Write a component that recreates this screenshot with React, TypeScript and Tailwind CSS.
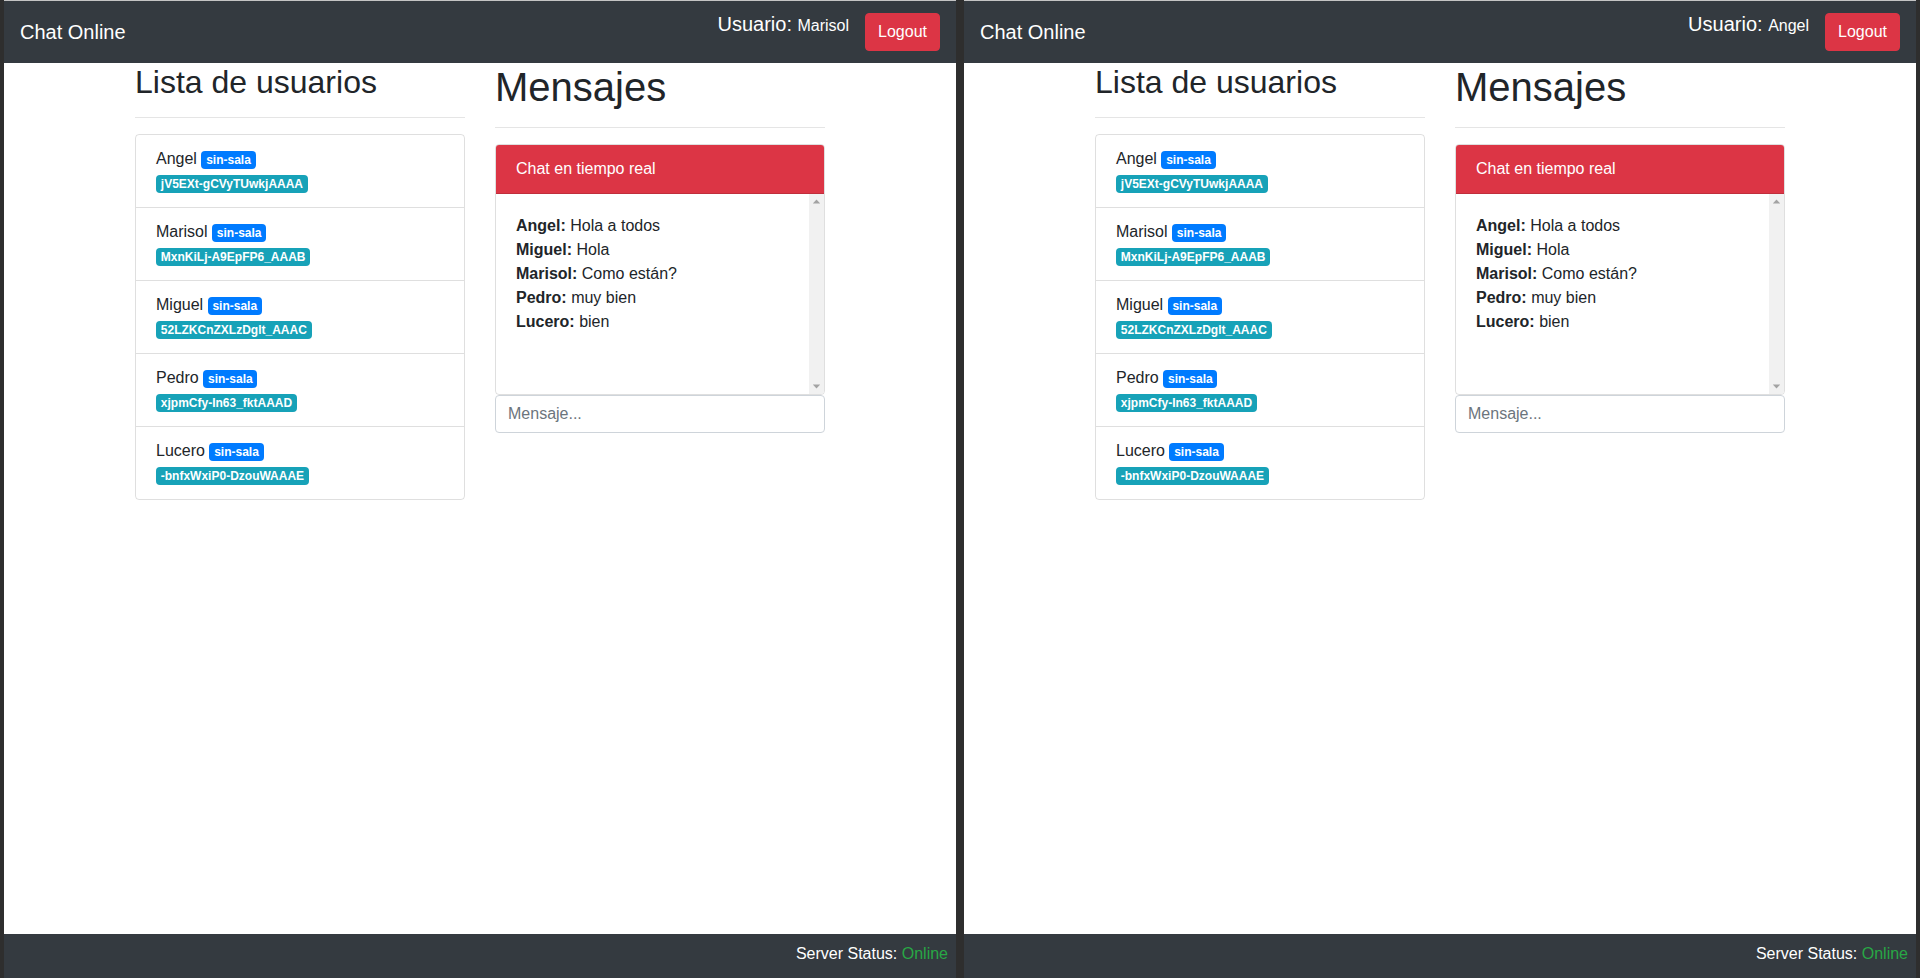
import React from 'react'

type User = { name: string; id: string }

const users: User[] = [
  { name: 'Angel', id: 'jV5EXt-gCVyTUwkjAAAA' },
  { name: 'Marisol', id: 'MxnKiLj-A9EpFP6_AAAB' },
  { name: 'Miguel', id: '52LZKCnZXLzDglt_AAAC' },
  { name: 'Pedro', id: 'xjpmCfy-In63_fktAAAD' },
  { name: 'Lucero', id: '-bnfxWxiP0-DzouWAAAE' },
]

const messages = [
  { from: 'Angel', text: 'Hola a todos' },
  { from: 'Miguel', text: 'Hola' },
  { from: 'Marisol', text: 'Como están?' },
  { from: 'Pedro', text: 'muy bien' },
  { from: 'Lucero', text: 'bien' },
]

function ChatWindow({ current }: { current: string }) {
  return (
    <div className="flex flex-col w-[952px] h-full bg-white border-t border-[#c4c4c4]">
      <nav className="h-[62px] shrink-0 bg-[#343a40] px-4 flex items-center justify-between">
        <span className="text-[20px] leading-[30px] text-white">Chat Online</span>
        <div className="flex items-center">
          <h5 className="text-[20px] leading-[1.2] text-white mb-4 mr-4">
            Usuario: <small className="text-[16px]">{current}</small>
          </h5>
          <button className="h-[38px] px-3 rounded border border-[#dc3545] bg-[#dc3545] text-white text-base leading-6">
            Logout
          </button>
        </div>
      </nav>

      <main className="flex-1">
        <div className="w-[720px] mx-auto px-[15px] flex gap-[30px]">
          <div className="w-[330px]">
            <h2 className="text-[32px] leading-[1.2] font-normal">Lista de usuarios</h2>
            <hr className="mt-4 mb-4 border-t border-black/10" />
            <ul className="border border-black/[.125] rounded divide-y divide-black/[.125]">
              {users.map((u) => (
                <li key={u.id} className="px-5 py-3 text-base leading-6">
                  {u.name}{' '}
                  <span className="inline-block px-[0.4em] py-[0.25em] text-[12px] leading-none font-bold text-white bg-[#007bff] rounded">
                    sin-sala
                  </span>
                  <br />
                  <span className="inline-block px-[0.4em] py-[0.25em] text-[12px] leading-none font-bold text-white bg-[#17a2b8] rounded">
                    {u.id}
                  </span>
                </li>
              ))}
            </ul>
          </div>

          <div className="w-[330px]">
            <h1 className="text-[40px] leading-[1.2] font-normal">Mensajes</h1>
            <hr className="mt-4 mb-4 border-t border-black/10" />
            <div className="border border-black/[.125] rounded overflow-hidden">
              <div className="bg-[#dc3545] text-white px-5 py-3 leading-6 border-b border-black/[.125]">
                Chat en tiempo real
              </div>
              <div className="flex h-[200px]">
                <div className="flex-1 p-5 leading-6">
                  {messages.map((m, i) => (
                    <div key={i}>
                      <strong className="font-bold">{m.from}:</strong> {m.text}
                    </div>
                  ))}
                </div>
                <div className="w-[15px] bg-[#f1f1f1] flex flex-col justify-between">
                  <svg width="15" height="15" viewBox="0 0 15 15">
                    <path d="M3.8 9.5 L7.5 5.5 L11.2 9.5 Z" fill="#a3a3a3" />
                  </svg>
                  <svg width="15" height="15" viewBox="0 0 15 15">
                    <path d="M3.8 5.5 L7.5 9.5 L11.2 5.5 Z" fill="#a3a3a3" />
                  </svg>
                </div>
              </div>
            </div>
            <input
              className="w-full h-[38px] px-3 border border-[#ced4da] rounded text-base text-[#495057] placeholder:text-[#6c757d] outline-none"
              placeholder="Mensaje..."
            />
          </div>
        </div>
      </main>

      <footer className="h-[44px] shrink-0 bg-[#343a40] p-2 text-right text-white leading-6">
        Server Status: <span className="text-[#28a745]">Online</span>
      </footer>
    </div>
  )
}

export default function App() {
  return (
    <div className="w-[1920px] h-[978px] bg-[#2e2e2e] flex gap-2 px-1 text-[#212529] font-['Liberation_Sans',Arial,sans-serif]">
      <ChatWindow current="Marisol" />
      <ChatWindow current="Angel" />
    </div>
  )
}
